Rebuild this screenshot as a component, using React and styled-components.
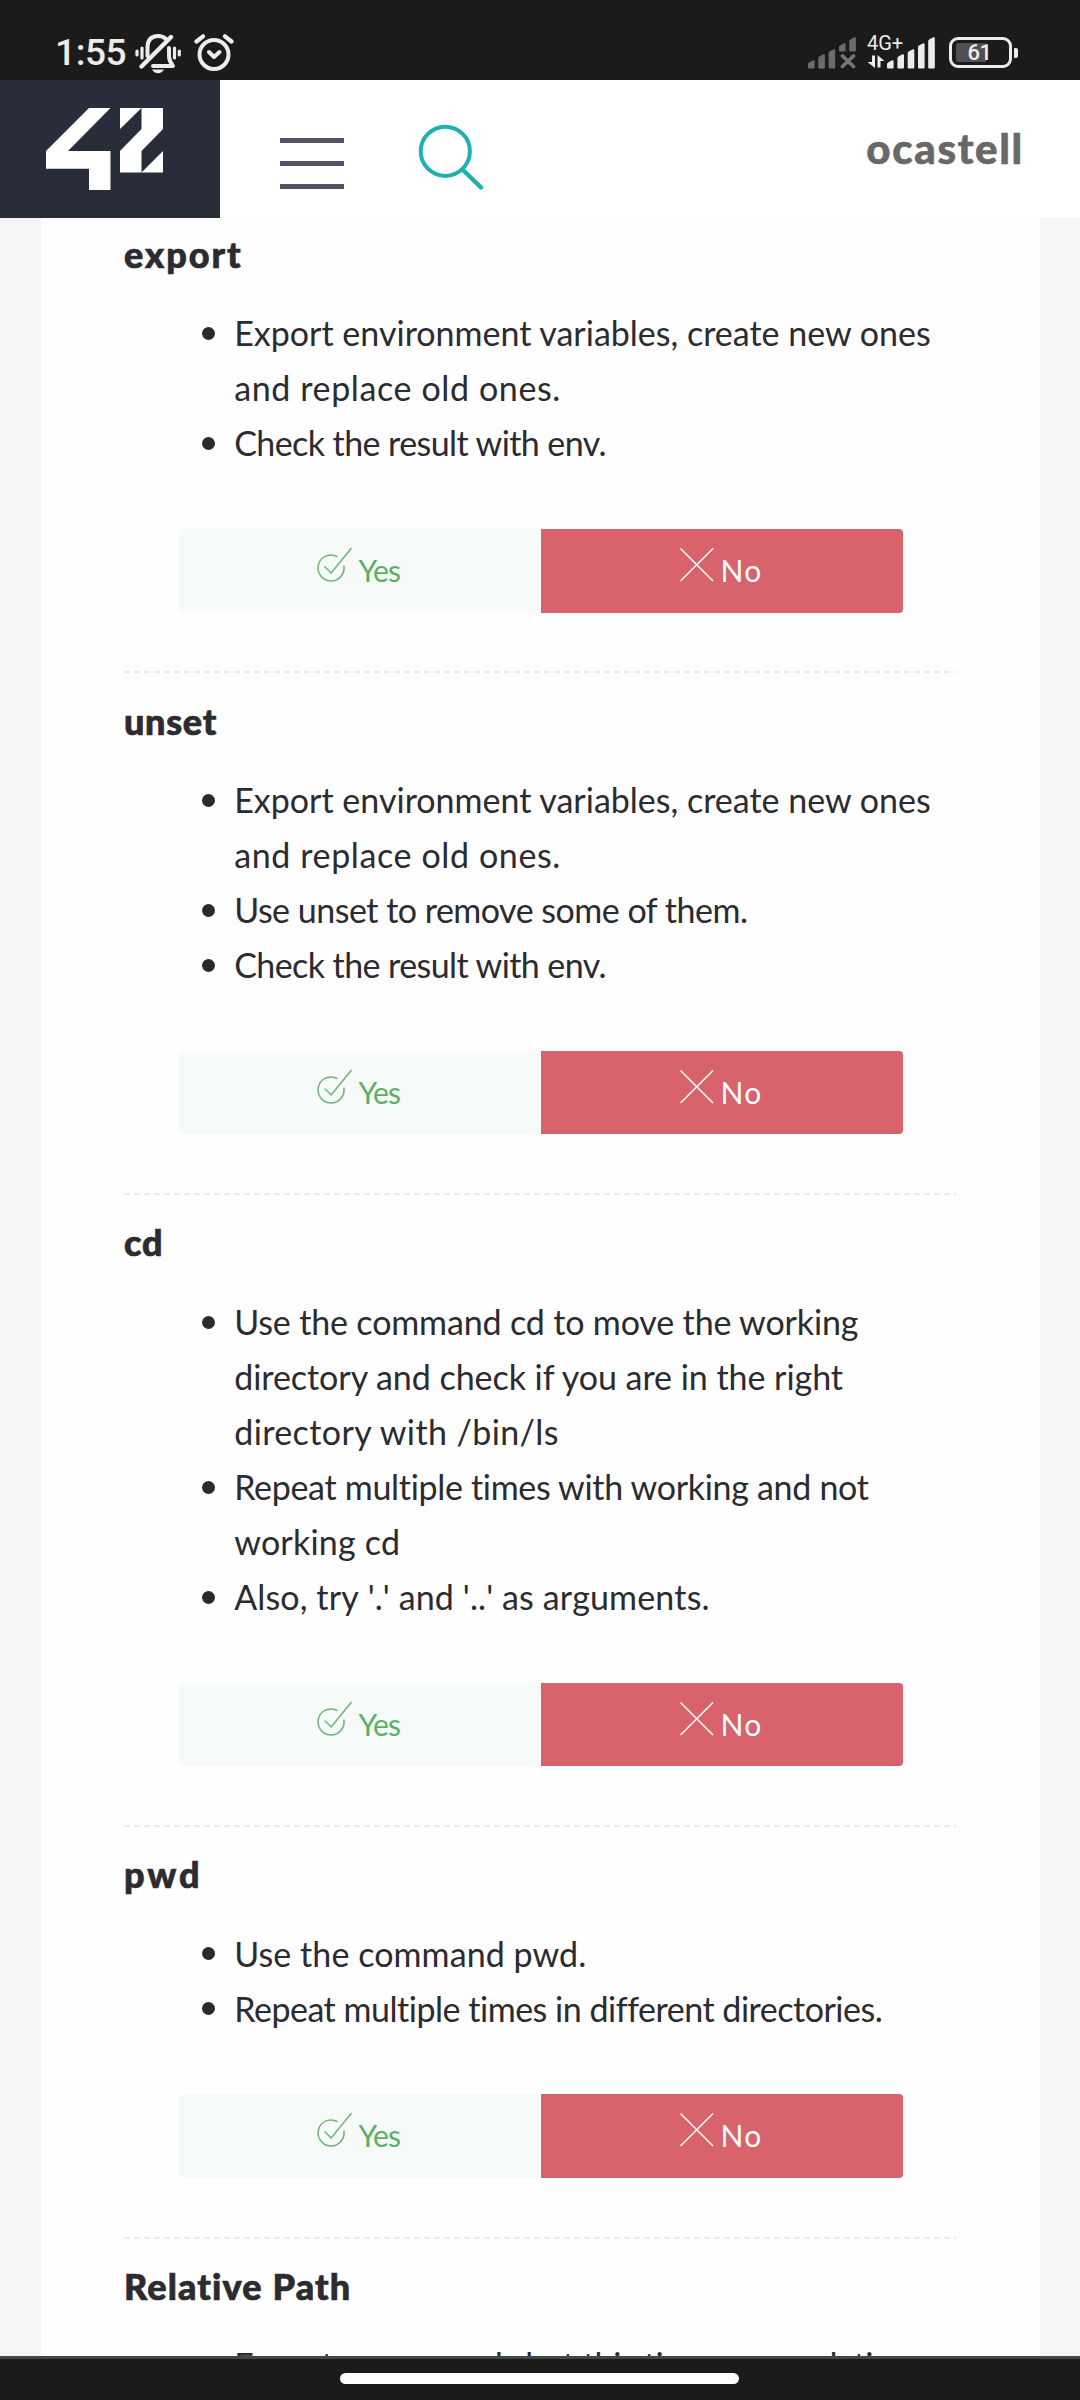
import React from "react";
import styled, { createGlobalStyle } from "styled-components";

const GlobalStyle = createGlobalStyle`
  * { box-sizing: border-box; }
  body { margin: 0; background: #1b1b1b; }
`;

const Screen = styled.div`
  width: 1080px;
  height: 2400px;
  display: flex;
  flex-direction: column;
  overflow: hidden;
  background: #f5f5f5;
  font-family: Lato, "Open Sans", sans-serif;
  font-variant-ligatures: none;
`;

const StatusBar = styled.div`
  flex: none;
  height: 80px;
  padding: 34px 62px 0 55px;
  display: flex;
  align-items: flex-start;
  background: #1b1b1b;
  color: #ececec;
  font-family: Roboto, sans-serif;
`;

const Clock = styled.span`
  width: 80px;
  font-size: 37px;
  line-height: 38px;
  font-weight: 500;
  letter-spacing: -0.4px;
`;

const StatusIcon = styled.svg`
  display: block;
  flex: none;
  width: ${(p) => p.$w}px;
  height: ${(p) => p.$h}px;
  margin-left: ${(p) => p.$ml || 0}px;
  margin-top: ${(p) => p.$mt || 0}px;
`;

const StatusRight = styled.div`
  margin-left: auto;
  display: flex;
  align-items: flex-start;
`;

const Network = styled.div`
  display: grid;
  grid-template-areas: "cell";
  margin-left: 11px;
  width: 68px;
  height: 35px;
  > * { grid-area: cell; }
`;

const NetworkLabel = styled.span`
  font-size: 20px;
  line-height: 18px;
  letter-spacing: 0;
`;

const Battery = styled.div`
  display: flex;
  align-items: center;
  margin: 3px 0 0 14px;
`;

const BatteryShell = styled.div`
  width: 63px;
  height: 31px;
  padding: 3px 4px;
  border: 3px solid #ececec;
  border-radius: 9px;
`;

const BatteryLevel = styled.div`
  height: 19px;
  border-radius: 3px;
  padding-right: 2px;
  text-align: center;
  background: linear-gradient(90deg, #505050 61%, transparent 61%);
  font-size: 22px;
  line-height: 20px;
  font-weight: 500;
  letter-spacing: -0.6px;
`;

const BatteryNub = styled.div`
  width: 4px;
  height: 10px;
  margin-left: 2px;
  border-radius: 1px 2px 2px 1px;
  background: #ececec;
`;

const Header = styled.header`
  flex: none;
  height: 138px;
  display: flex;
  background: #fff;
`;

const LogoBox = styled.div`
  width: 220px;
  padding: 28px 0 0 46px;
  background: #292d39;
`;

const LogoMark = styled.svg`
  display: block;
  width: 118px;
  height: 82px;
`;

const MenuButton = styled.button`
  width: 64px;
  height: 51px;
  margin: 58px 0 0 60px;
  padding: 0;
  border: 0;
  background: none;
  display: flex;
  flex-direction: column;
  justify-content: space-between;
`;

const MenuBar = styled.span`
  width: 64px;
  height: 5px;
  background: #525466;
`;

const SearchIcon = styled.svg`
  display: block;
  width: 68px;
  height: 68px;
  margin: 44px 0 0 74px;
`;

const UserName = styled.span`
  margin: 42px 56px 0 auto;
  font-size: 42px;
  line-height: 52px;
  font-weight: 900;
  letter-spacing: 1.7px;
  -webkit-text-stroke: 0.6px #686868;
  color: #686868;
`;

const Content = styled.main`
  flex: 1;
  min-height: 0;
  margin: 0 40px 0 41px;
  padding: 14px 84px 0 83px;
  overflow: hidden;
  background: #fefefe;
`;

const Section = styled.section`
  color: #2b2b30;
`;

const Title = styled.h4`
  margin: 0 0 29.4px;
  font-size: 36px;
  line-height: 44px;
  font-weight: 900;
  letter-spacing: ${(p) => p.$track}px;
  -webkit-text-stroke: 0.7px #2b2b30;
`;

const List = styled.ul`
  margin: 0;
  padding: 0 0 0 77px;
  list-style: none;
`;

const Item = styled.li`
  display: flex;
  font-size: 34px;
  line-height: 55.05px;

  &::before {
    content: "";
    flex: none;
    width: 13px;
    height: 13px;
    margin: 21.7px 19px 0 1.2px;
    border-radius: 50%;
    background: #2b2b2e;
  }
`;

const Line = styled.span`
  display: block;
  white-space: pre;
  letter-spacing: ${(p) => p.$track}px;
  font-kerning: ${(p) => (p.$plain ? "none" : "normal")};
`;

const Answers = styled.div`
  display: flex;
  width: 724px;
  height: 83.7px;
  margin: 58.5px 0 58.5px 54.5px;
  border-radius: 4px;
  overflow: hidden;
`;

const Answer = styled.button`
  flex: 1;
  display: flex;
  justify-content: flex-start;
  align-items: flex-start;
  padding: 18px 0 0 138.5px;
  border: 0;
  font-family: inherit;
  font-size: 30px;
  line-height: 46px;
  letter-spacing: ${(p) => (p.$yes ? -0.9 : 1.3)}px;
  color: ${(p) => (p.$yes ? "#5cb065" : "#fff")};
  background: ${(p) => (p.$yes ? "#f6faf9" : "#d8636c")};
`;

const AnswerIcon = styled.svg`
  width: 36px;
  height: 36px;
  margin: 0 5.5px 0 0;
  flex: none;
`;

const Divider = styled.div`
  height: 2px;
  margin-bottom: 25.5px;
  background: repeating-linear-gradient(90deg, #ececec 0 6px, transparent 6px 10px);
`;

const NavBar = styled.div`
  flex: none;
  height: 44px;
  padding: 14px 0 0 340px;
  border-top: 3px solid #444646;
  background: #1b1b1b;
`;

const HomePill = styled.div`
  width: 399px;
  height: 11px;
  border-radius: 6px;
  background: #fff;
`;

const sections = [
  {
    title: ["export", 2],
    items: [
      [["Export environment variables, create new ones", 0], ["and replace old ones.", 0.62]],
      [["Check the result with env.", -0.58]],
    ],
  },
  {
    title: ["unset", 0.7],
    items: [
      [["Export environment variables, create new ones", 0], ["and replace old ones.", 0.62]],
      [["Use unset to remove some of them.", -0.5]],
      [["Check the result with env.", -0.58]],
    ],
  },
  {
    title: ["cd", 0.9],
    items: [
      [
        ["Use the command cd to move the working", -0.15],
        ["directory and check if you are in the right", -0.04],
        ["directory with /bin/ls", 0.4],
      ],
      [["Repeat multiple times with working and not", -0.31], ["working cd", 0.22]],
      [["Also, try '.' and '..' as arguments.", 0.12, true]],
    ],
  },
  {
    title: ["pwd", 3],
    items: [
      [["Use the command pwd.", 0.08]],
      [["Repeat multiple times in different directories.", -0.48]],
    ],
  },
  {
    title: ["Relative Path", 1.15],
    items: [[["Execute commands but this time use a relative", -0.36]]],
    open: true,
  },
];

const signalPath = (x, top, bottom = 34) =>
  `M${x} ${bottom - 1}V${top + 4}q0-1.2 1-1.9l3.6-2.1q2-.9 2 1V${bottom - 1}q0 1-1 1h-4.6q-1 0-1-1z`;

const MutedBell = () => (
  <StatusIcon $w={46} $h={40} viewBox="0 0 46 40" fill="none" stroke="#ececec" strokeLinecap="round" strokeLinejoin="round">
    <path d="M2 17v4M7 14v10M39.500 14v10M44.300 17v4" strokeWidth="3.200" />
    <path d="M12.500 22V14Q12.500 2 23 2q5 0 8 3M34 14v8q0 5 4 10H18" strokeWidth="4" />
    <path d="M6.500 32.500L36 3" strokeWidth="4.400" />
    <path d="M17 35.500h12q-2 3.700-6 3.700t-6-3.700z" fill="#ececec" stroke="none" />
  </StatusIcon>
);

const Alarm = () => (
  <StatusIcon $w={40} $h={40} $ml={13} viewBox="0 0 40 40" fill="none" stroke="#ececec" strokeLinecap="round" strokeLinejoin="round">
    <circle cx="20" cy="20.500" r="14.500" strokeWidth="4" />
    <path d="M2.500 7.500L9 2.300M37.500 7.500L31 2.300" strokeWidth="4.200" />
    <path d="M15 18l5 5 5.500-5" strokeWidth="4" />
  </StatusIcon>
);

const NoSignal = () => (
  <StatusIcon $w={48} $h={35} viewBox="0 0 48 34" fill="#6c6c6c">
    <path d={[[0, 26], [10.3, 20], [20.6, 15]].map(([x, t]) => signalPath(x, t)).join("")} />
    <path d={signalPath(31, 9, 17) + signalPath(41.3, 3, 17)} />
    <path d="M34.500 21.500l11 10.500M45.500 21.500l-11 10.500" stroke="#757575" strokeWidth="3.800" strokeLinecap="round" />
  </StatusIcon>
);

const Signal = () => (
  <StatusIcon $w={68} $h={35} viewBox="0 0 68 34" fill="#ececec">
    <path d={[[20, 26], [30.4, 20], [40.7, 15], [51, 9], [61.2, 3]].map(([x, t]) => signalPath(x, t)).join("")} />
    <path d="M5 21h3v12.500L.500 27.500H5zM10.500 33V20.500L17.500 26.500H13.500V33z" />
  </StatusIcon>
);

const YesIcon = () => (
  <AnswerIcon viewBox="0 0 36 36" fill="none" stroke="#6db37a" strokeWidth="1.500">
    <path d="M20.500 9.700A13 13 0 1 0 26.800 18.500" />
    <path d="M7.500 19.500l6.700 6.500L34.500 1" />
  </AnswerIcon>
);

const NoIcon = () => (
  <AnswerIcon viewBox="0 0 36 36" fill="none" stroke="#fff" strokeWidth="1.500">
    <path d="M1.500 1.500L34 34M34 1.500L1.500 34" />
  </AnswerIcon>
);

function Question({ title, items, open }) {
  return (
    <Section>
      <Title $track={title[1]}>{title[0]}</Title>
      <List>
        {items.map((lines, i) => (
          <Item key={i}>
            <div>
              {lines.map(([text, track, plain]) => (
                <Line key={text} $track={track} $plain={plain}>{text}</Line>
              ))}
            </div>
          </Item>
        ))}
      </List>
      {!open && (
        <>
          <Answers>
            <Answer $yes><YesIcon />Yes</Answer>
            <Answer><NoIcon />No</Answer>
          </Answers>
          <Divider />
        </>
      )}
    </Section>
  );
}

export default function App() {
  return (
    <Screen>
      <GlobalStyle />
      <StatusBar>
        <Clock>1:55</Clock>
        <MutedBell />
        <Alarm />
        <StatusRight>
          <NoSignal />
          <Network>
            <NetworkLabel>4G+</NetworkLabel>
            <Signal />
          </Network>
          <Battery>
            <BatteryShell><BatteryLevel>61</BatteryLevel></BatteryShell>
            <BatteryNub />
          </Battery>
        </StatusRight>
      </StatusBar>
      <Header>
        <LogoBox>
          <LogoMark viewBox="0 0 118 82" fill="#fff">
            <path d="M43 0h21.500L22 43h42.500v39H43V60.700H0V43z" />
            <path d="M74 0h21.500L74 21zM95.500 0H117v21L95.500 43v21.500H74V43l21.500-22zM117 43v21.500H95.500z" />
          </LogoMark>
        </LogoBox>
        <MenuButton aria-label="Menu"><MenuBar /><MenuBar /><MenuBar /></MenuButton>
        <SearchIcon viewBox="0 0 68 68" fill="none" stroke="#1fb0b0">
          <circle cx="27.300" cy="27.300" r="24.600" strokeWidth="4" />
          <path d="M45.500 46.500L63 63.500" strokeWidth="4.500" strokeLinecap="round" />
        </SearchIcon>
        <UserName>ocastell</UserName>
      </Header>
      <Content>
        {sections.map((s) => <Question key={s.title[0]} {...s} />)}
      </Content>
      <NavBar><HomePill /></NavBar>
    </Screen>
  );
}
